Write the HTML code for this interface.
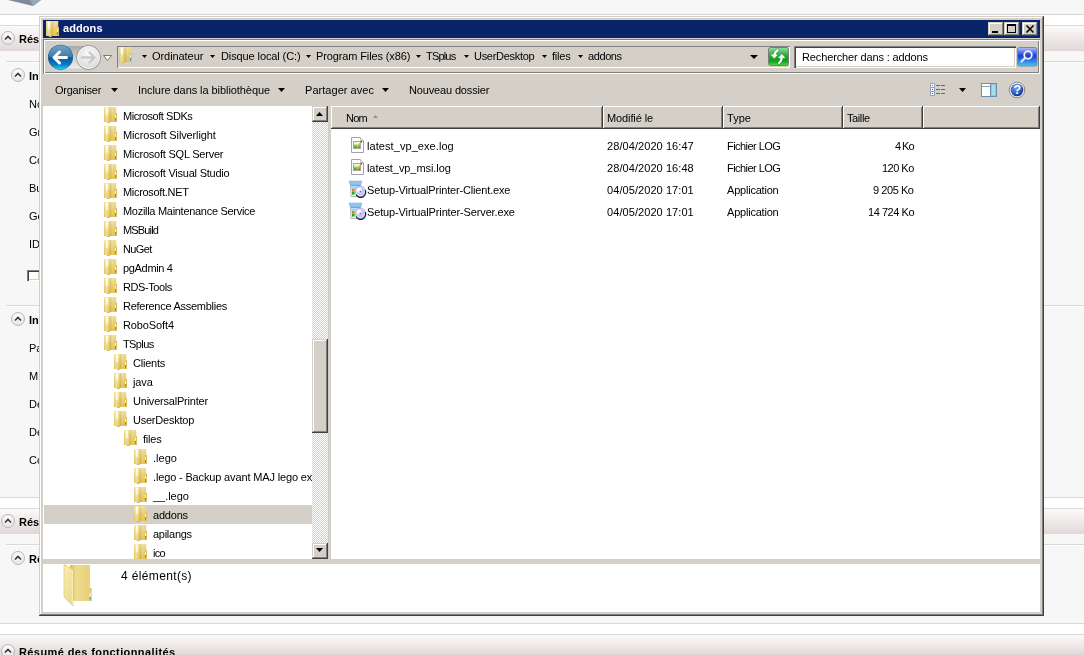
<!DOCTYPE html><html><head><meta charset="utf-8"><style>
html,body{margin:0;padding:0}
body{width:1084px;height:655px;position:relative;overflow:hidden;background:#f7f7f7;font-family:"Liberation Sans",sans-serif;}
.t{position:absolute;white-space:nowrap;will-change:transform}
.r{position:absolute}
svg{position:absolute;overflow:visible}
</style></head><body>
<svg width="0" height="0" style="position:absolute">
<defs>
<linearGradient id="fgF" x1="0" y1="0" x2="1" y2="0"><stop offset="0" stop-color="#e6c75c"/><stop offset="0.35" stop-color="#fbefb2"/><stop offset="0.7" stop-color="#f1da7c"/><stop offset="1" stop-color="#dcbb4e"/></linearGradient>
<linearGradient id="fgB" x1="0" y1="0" x2="1" y2="0"><stop offset="0" stop-color="#c9a642"/><stop offset="0.3" stop-color="#eed474"/><stop offset="1" stop-color="#e4c65e"/></linearGradient>
<linearGradient id="fgV" x1="0" y1="0" x2="0" y2="1"><stop offset="0" stop-color="#fff" stop-opacity="0.35"/><stop offset="1" stop-color="#c8a030" stop-opacity="0.25"/></linearGradient>
<symbol id="fold" viewBox="0 0 14 16">
 <rect x="6" y="0" width="6.2" height="15" fill="url(#fgB)"/>
 <rect x="11.8" y="6" width="1.2" height="9" fill="#dcbf58"/>
 <rect x="0" y="0" width="6.2" height="15" fill="url(#fgF)"/>
 <rect x="0" y="0" width="12.2" height="15" fill="url(#fgV)"/>
 <path d="M2 1 H4 L3.6 8 H2.4 Z" fill="#ffffff" opacity="0.9"/>
 <rect x="2.8" y="15" width="3" height="1" fill="#d6b955"/>
 <rect x="11" y="8" width="1" height="3" fill="#e6f3fb"/>
 <rect x="11" y="11" width="1" height="2.5" fill="#2e98dd"/>
</symbol>
<linearGradient id="gBack1" x1="0" y1="0" x2="0" y2="1"><stop offset="0" stop-color="#7aa2c4"/><stop offset="1" stop-color="#3e79a8"/></linearGradient>
<linearGradient id="gBack2" x1="0" y1="0" x2="0" y2="1"><stop offset="0" stop-color="#075a9e"/><stop offset="0.6" stop-color="#0a78c0"/><stop offset="1" stop-color="#22d0f8"/></linearGradient>
<radialGradient id="gFwd" cx="0.5" cy="0.35" r="0.7"><stop offset="0" stop-color="#fbfbfb"/><stop offset="1" stop-color="#d6d6d6"/></radialGradient>
<linearGradient id="gGreen" x1="0" y1="0" x2="0" y2="1"><stop offset="0" stop-color="#9cdcac"/><stop offset="0.45" stop-color="#12b024"/><stop offset="0.75" stop-color="#0ca418"/><stop offset="1" stop-color="#58d838"/></linearGradient>
<linearGradient id="gSearch" x1="0" y1="0" x2="0" y2="1"><stop offset="0" stop-color="#b4c0fa"/><stop offset="0.45" stop-color="#1838d8"/><stop offset="1" stop-color="#48c8f8"/></linearGradient>
<radialGradient id="gHelp" cx="0.4" cy="0.3" r="0.75"><stop offset="0" stop-color="#7aa8f0"/><stop offset="1" stop-color="#0a2c9a"/></radialGradient>
<linearGradient id="gBand" x1="0" y1="0" x2="0" y2="1"><stop offset="0" stop-color="#ffffff"/><stop offset="1" stop-color="#e2dedd"/></linearGradient>
<radialGradient id="gCirc" cx="0.5" cy="0.3" r="0.7"><stop offset="0" stop-color="#ffffff"/><stop offset="1" stop-color="#e4e4e4"/></radialGradient>
</defs>
</svg>

<div class="r" style="left:0px;top:0px;width:1084px;height:14px;background:#f7f7f7;"></div>
<svg style="left:0;top:0" width="50" height="8"><path d="M8 0 L33 6 L41 0 Z" fill="#7d8a99"/><path d="M30 0 L33 6 L41 0 Z" fill="#9aa6b3"/></svg>
<div class="r" style="left:0px;top:14px;width:1084px;height:1px;background:#d6d6d6;"></div>
<div class="r" style="left:0px;top:15px;width:1084px;height:10px;background:#ffffff;"></div>
<div class="r" style="left:0px;top:25px;width:1084px;height:1px;background:#dadada;"></div>
<div class="r" style="left:0px;top:26px;width:1084px;height:25px;background:linear-gradient(#fefafa,#dfd8d7);"></div>
<div class="r" style="left:0px;top:51px;width:1084px;height:446px;background:#f7f7f7;"></div>
<div class="r" style="left:6px;top:61px;width:1078px;height:1px;background:#dad8d8;"></div>
<div class="r" style="left:6px;top:62px;width:1078px;height:1px;background:#fdfdfd;"></div>
<svg style="left:0px;top:30px" width="16" height="16"><circle cx="8" cy="8" r="6.5" fill="url(#gCirc)" stroke="#b9b9b9" stroke-width="1"/><path d="M5 9.5 L8 6.5 L11 9.5" fill="none" stroke="#333" stroke-width="1.6"/></svg>
<div class="t" style="left:19px;top:33px;font:bold 11px/13px 'Liberation Sans',sans-serif;color:#000;letter-spacing:0.000px;">Résumé</div>
<svg style="left:9.5px;top:67px" width="16" height="16"><circle cx="8" cy="8" r="6.5" fill="url(#gCirc)" stroke="#b9b9b9" stroke-width="1"/><path d="M5 9.5 L8 6.5 L11 9.5" fill="none" stroke="#333" stroke-width="1.6"/></svg>
<div class="t" style="left:29px;top:70px;font:bold 11px/13px 'Liberation Sans',sans-serif;color:#000;letter-spacing:0.000px;">Informations</div>
<div class="t" style="left:29px;top:98px;font:11px/13px 'Liberation Sans',sans-serif;color:#000;letter-spacing:0.000px;">Nom</div>
<div class="t" style="left:29px;top:126px;font:11px/13px 'Liberation Sans',sans-serif;color:#000;letter-spacing:0.000px;">Groupe</div>
<div class="t" style="left:29px;top:154px;font:11px/13px 'Liberation Sans',sans-serif;color:#000;letter-spacing:0.000px;">Compte</div>
<div class="t" style="left:29px;top:182px;font:11px/13px 'Liberation Sans',sans-serif;color:#000;letter-spacing:0.000px;">Build</div>
<div class="t" style="left:29px;top:210px;font:11px/13px 'Liberation Sans',sans-serif;color:#000;letter-spacing:0.000px;">Gestion</div>
<div class="t" style="left:29px;top:238px;font:11px/13px 'Liberation Sans',sans-serif;color:#000;letter-spacing:0.000px;">ID</div>
<div class="r" style="left:27px;top:270px;width:13px;height:11px;background:#fff;box-shadow: inset 1px 1px #808080, inset 2px 2px #404040, inset -1px -1px #ffffff, inset -2px -2px #d4d0c8;"></div>
<div class="r" style="left:6px;top:305px;width:1078px;height:1px;background:#dad8d8;"></div>
<div class="r" style="left:6px;top:306px;width:1078px;height:1px;background:#fdfdfd;"></div>
<svg style="left:10px;top:310.5px" width="16" height="16"><circle cx="8" cy="8" r="6.5" fill="url(#gCirc)" stroke="#b9b9b9" stroke-width="1"/><path d="M5 9.5 L8 6.5 L11 9.5" fill="none" stroke="#333" stroke-width="1.6"/></svg>
<div class="t" style="left:29px;top:314px;font:bold 11px/13px 'Liberation Sans',sans-serif;color:#000;letter-spacing:0.000px;">Informations</div>
<div class="t" style="left:29px;top:342px;font:11px/13px 'Liberation Sans',sans-serif;color:#000;letter-spacing:0.000px;">Pare-feu</div>
<div class="t" style="left:29px;top:370px;font:11px/13px 'Liberation Sans',sans-serif;color:#000;letter-spacing:0.000px;">Mises</div>
<div class="t" style="left:29px;top:398px;font:11px/13px 'Liberation Sans',sans-serif;color:#000;letter-spacing:0.000px;">Deploiement</div>
<div class="t" style="left:29px;top:426px;font:11px/13px 'Liberation Sans',sans-serif;color:#000;letter-spacing:0.000px;">Deploiement</div>
<div class="t" style="left:29px;top:454px;font:11px/13px 'Liberation Sans',sans-serif;color:#000;letter-spacing:0.000px;">Config</div>
<div class="r" style="left:0px;top:497px;width:1084px;height:1px;background:#d9d9d9;"></div>
<div class="r" style="left:0px;top:498px;width:1084px;height:10px;background:#ffffff;"></div>
<div class="r" style="left:0px;top:508px;width:1084px;height:1px;background:#dadada;"></div>
<div class="r" style="left:0px;top:509px;width:1084px;height:25px;background:linear-gradient(#fefafa,#dfd8d7);"></div>
<svg style="left:0px;top:512.5px" width="16" height="16"><circle cx="8" cy="8" r="6.5" fill="url(#gCirc)" stroke="#b9b9b9" stroke-width="1"/><path d="M5 9.5 L8 6.5 L11 9.5" fill="none" stroke="#333" stroke-width="1.6"/></svg>
<div class="t" style="left:19px;top:516px;font:bold 11px/13px 'Liberation Sans',sans-serif;color:#000;letter-spacing:0.000px;">Résumé des rôles</div>
<div class="r" style="left:6px;top:544px;width:1078px;height:1px;background:#dad8d8;"></div>
<div class="r" style="left:6px;top:545px;width:1078px;height:1px;background:#fdfdfd;"></div>
<svg style="left:9.5px;top:550px" width="16" height="16"><circle cx="8" cy="8" r="6.5" fill="url(#gCirc)" stroke="#b9b9b9" stroke-width="1"/><path d="M5 9.5 L8 6.5 L11 9.5" fill="none" stroke="#333" stroke-width="1.6"/></svg>
<div class="t" style="left:29px;top:553px;font:bold 11px/13px 'Liberation Sans',sans-serif;color:#000;letter-spacing:0.000px;">Rôles</div>
<div class="r" style="left:0px;top:623px;width:1084px;height:1px;background:#d9d9d9;"></div>
<div class="r" style="left:0px;top:624px;width:1084px;height:10px;background:#ffffff;"></div>
<div class="r" style="left:0px;top:634px;width:1084px;height:1px;background:#dadada;"></div>
<div class="r" style="left:0px;top:635px;width:1084px;height:20px;background:linear-gradient(#fefafa,#dfd8d7);"></div>
<svg style="left:0px;top:643px" width="16" height="16"><circle cx="8" cy="8" r="6.5" fill="url(#gCirc)" stroke="#b9b9b9" stroke-width="1"/><path d="M5 9.5 L8 6.5 L11 9.5" fill="none" stroke="#333" stroke-width="1.6"/></svg>
<div class="t" style="left:19px;top:646px;font:bold 11px/13px 'Liberation Sans',sans-serif;color:#000;letter-spacing:0.000px;letter-spacing:0.4px">Résumé des fonctionnalités</div>
<div class="r" style="left:39px;top:16px;width:1005px;height:600px;background:#d4d0c8;box-shadow: inset -1px -1px #404040, inset 1px 1px #d4d0c8, inset -2px -2px #808080, inset 2px 2px #ffffff;"></div>
<div class="r" style="left:43px;top:20px;width:997px;height:18px;background:#0a246a;"></div>
<svg style="left:46px;top:21px" width="14" height="16"><use href="#fold" width="14" height="16"/></svg>
<div class="t" style="left:63px;top:22px;font:bold 11px/13px 'Liberation Sans',sans-serif;color:#fff;letter-spacing:0.080px;">addons</div>
<div class="r" style="left:988px;top:22px;width:16px;height:14px;background:#d4d0c8;box-shadow: inset -1px -1px #404040, inset 1px 1px #d4d0c8, inset -2px -2px #808080, inset 2px 2px #ffffff;"></div>
<div class="r" style="left:1004px;top:22px;width:16px;height:14px;background:#d4d0c8;box-shadow: inset -1px -1px #404040, inset 1px 1px #d4d0c8, inset -2px -2px #808080, inset 2px 2px #ffffff;"></div>
<div class="r" style="left:1022px;top:22px;width:16px;height:14px;background:#d4d0c8;box-shadow: inset -1px -1px #404040, inset 1px 1px #d4d0c8, inset -2px -2px #808080, inset 2px 2px #ffffff;"></div>
<div class="r" style="left:992px;top:31px;width:6px;height:2px;background:#000;"></div>
<div class="r" style="left:1007px;top:24px;width:9px;height:9px;background:transparent;box-sizing:border-box;border:1px solid #000;border-top-width:2px;"></div>
<svg style="left:1022px;top:22px" width="16" height="14"><path d="M4.5 3.5 L11.5 10.5 M11.5 3.5 L4.5 10.5" stroke="#000" stroke-width="1.6"/></svg>
<div class="r" style="left:43px;top:38px;width:997px;height:574px;background:#d4d0c8;"></div>
<div class="r" style="left:43px;top:39px;width:997px;height:35px;background:#d4d0c8;box-shadow: inset 1px 1px #808080, inset 2px 2px #ffffff, inset -1px -1px #ffffff, inset -2px -2px #808080;"></div>
<svg style="left:46px;top:43px" width="70" height="30">
<defs><linearGradient id="gPill" x1="0" y1="0" x2="0" y2="1"><stop offset="0" stop-color="#a9a9a9"/><stop offset="0.5" stop-color="#cfcfcf"/><stop offset="1" stop-color="#ececec"/></linearGradient></defs>
<rect x="12" y="3" width="32" height="22.5" fill="url(#gPill)"/>
<circle cx="42.5" cy="14.5" r="12" fill="url(#gFwd)" stroke="#8e8e8e" stroke-width="1"/>
<circle cx="42.5" cy="14.5" r="11" fill="none" stroke="#fafafa" stroke-width="0.8"/>
<path d="M36 14.5 H48 M43.5 9.5 L48.5 14.5 L43.5 19.5" fill="none" stroke="#c9c9c9" stroke-width="2.4" stroke-linecap="round" stroke-linejoin="round"/>
<circle cx="14.5" cy="14.2" r="12.5" fill="#1c5f96"/>
<path d="M2.5 14.2 A12 12 0 0 1 26.5 14.2 Z" fill="url(#gBack1)"/>
<path d="M2.5 14.2 A12 12 0 0 0 26.5 14.2 Z" fill="url(#gBack2)"/>
<path d="M20.5 14.5 H9 M13.5 9 L8 14.5 L13.5 20" fill="none" stroke="#ffffff" stroke-width="3" stroke-linecap="round" stroke-linejoin="round"/>
<path d="M57.5 12.5 L65.5 12.5 L61.5 17.5 Z" fill="#fff" stroke="#777" stroke-width="1"/>
</svg>
<div class="r" style="left:117px;top:46px;width:673px;height:22px;background:#d4d0c8;box-shadow: inset 1px 1px #808080, inset -1px -1px #ffffff;"></div>
<svg style="left:119px;top:47px" width="14" height="16"><use href="#fold" width="14" height="16"/></svg>
<svg style="left:142px;top:55px" width="5" height="3"><path d="M0 0 L5 0 L2.5 3 Z" fill="#000"/></svg>
<div class="t" style="left:152px;top:50px;font:11px/13px 'Liberation Sans',sans-serif;color:#000;letter-spacing:-0.067px;">Ordinateur</div>
<svg style="left:210px;top:55px" width="5" height="3"><path d="M0 0 L5 0 L2.5 3 Z" fill="#000"/></svg>
<div class="t" style="left:221px;top:50px;font:11px/13px 'Liberation Sans',sans-serif;color:#000;letter-spacing:-0.106px;">Disque local (C:)</div>
<svg style="left:306px;top:55px" width="5" height="3"><path d="M0 0 L5 0 L2.5 3 Z" fill="#000"/></svg>
<div class="t" style="left:316px;top:50px;font:11px/13px 'Liberation Sans',sans-serif;color:#000;letter-spacing:-0.122px;">Program Files (x86)</div>
<svg style="left:416px;top:55px" width="5" height="3"><path d="M0 0 L5 0 L2.5 3 Z" fill="#000"/></svg>
<div class="t" style="left:426px;top:50px;font:11px/13px 'Liberation Sans',sans-serif;color:#000;letter-spacing:-0.820px;">TSplus</div>
<svg style="left:464px;top:55px" width="5" height="3"><path d="M0 0 L5 0 L2.5 3 Z" fill="#000"/></svg>
<div class="t" style="left:474px;top:50px;font:11px/13px 'Liberation Sans',sans-serif;color:#000;letter-spacing:-0.300px;">UserDesktop</div>
<svg style="left:542px;top:55px" width="5" height="3"><path d="M0 0 L5 0 L2.5 3 Z" fill="#000"/></svg>
<div class="t" style="left:552px;top:50px;font:11px/13px 'Liberation Sans',sans-serif;color:#000;letter-spacing:-0.225px;">files</div>
<svg style="left:578px;top:55px" width="5" height="3"><path d="M0 0 L5 0 L2.5 3 Z" fill="#000"/></svg>
<div class="t" style="left:588px;top:50px;font:11px/13px 'Liberation Sans',sans-serif;color:#000;letter-spacing:-0.400px;">addons</div>
<svg style="left:750px;top:55px" width="8" height="4"><path d="M0 0 L8 0 L4.0 4 Z" fill="#000"/></svg>
<svg style="left:768px;top:47px" width="22" height="20">
<rect x="0.5" y="0.5" width="20" height="18" rx="2" fill="url(#gGreen)" stroke="#7c7c7c"/>
<g stroke="#0c5a10" stroke-width="1" stroke-linejoin="round" stroke-linecap="round" opacity="0.55"><path d="M6.3 9 Q6.6 5 9.6 3.2" fill="none" stroke-width="3.2"/><path d="M2.5 7.5 L10 7.5 L6.3 11.8 Z" fill="#0c5a10"/><path d="M13.8 10 Q13.6 14 11 16" fill="none" stroke-width="3.2"/><path d="M10 11 L17.5 11 L13.8 6.8 Z" fill="#0c5a10"/></g>
<g fill="#fff" stroke="#fff" stroke-linejoin="round" stroke-linecap="round"><path d="M6.3 9 Q6.6 5 9.6 3.2" fill="none" stroke-width="2.2"/><path d="M3 7.8 L9.5 7.8 L6.3 11.3 Z" stroke-width="0.6"/><path d="M13.8 10 Q13.6 14 11 16" fill="none" stroke-width="2.2"/><path d="M10.5 10.7 L17 10.7 L13.8 7.2 Z" stroke-width="0.6"/></g>
</svg>
<div class="r" style="left:794px;top:46px;width:222px;height:22px;background:#fff;box-shadow: inset 1px 1px #808080, inset 2px 2px #404040, inset -1px -1px #ffffff, inset -2px -2px #d4d0c8;"></div>
<div class="t" style="left:802px;top:51px;font:11px/13px 'Liberation Sans',sans-serif;color:#000;letter-spacing:-0.130px;">Rechercher dans : addons</div>
<svg style="left:1017px;top:47px" width="21" height="20">
<rect x="0.5" y="0.5" width="19.5" height="18.5" rx="2" fill="url(#gSearch)" stroke="#7a86a8"/>
<circle cx="11" cy="8" r="3.8" fill="none" stroke="#f4f4f4" stroke-width="1.8"/>
<path d="M8.2 10.8 L4.5 14.5" stroke="#e8e8e8" stroke-width="2.2" stroke-linecap="round"/>
</svg>
<div class="t" style="left:55px;top:84px;font:11px/13px 'Liberation Sans',sans-serif;color:#000;letter-spacing:-0.250px;">Organiser</div>
<svg style="left:111px;top:88px" width="7" height="4"><path d="M0 0 L7 0 L3.5 4 Z" fill="#000"/></svg>
<div class="t" style="left:138px;top:84px;font:11px/13px 'Liberation Sans',sans-serif;color:#000;letter-spacing:-0.067px;">Inclure dans la bibliothèque</div>
<svg style="left:278px;top:88px" width="7" height="4"><path d="M0 0 L7 0 L3.5 4 Z" fill="#000"/></svg>
<div class="t" style="left:305px;top:84px;font:11px/13px 'Liberation Sans',sans-serif;color:#000;letter-spacing:0.042px;">Partager avec</div>
<svg style="left:382px;top:88px" width="7" height="4"><path d="M0 0 L7 0 L3.5 4 Z" fill="#000"/></svg>
<div class="t" style="left:409px;top:84px;font:11px/13px 'Liberation Sans',sans-serif;color:#000;letter-spacing:-0.150px;">Nouveau dossier</div>
<svg style="left:929px;top:82px" width="18" height="16" shape-rendering="crispEdges">
<rect x="1.5" y="1.5" width="4" height="4" fill="#fff" stroke="#8ea4c0"/><rect x="3" y="3" width="1" height="1" fill="#3a9a3a"/>
<rect x="1.5" y="5.5" width="4" height="4" fill="#fff" stroke="#8ea4c0"/><rect x="3" y="7" width="1" height="1" fill="#e02020"/>
<rect x="1.5" y="9.5" width="4" height="4" fill="#fff" stroke="#8ea4c0"/><rect x="3" y="11" width="1" height="1" fill="#2050e0"/>
<rect x="7" y="3" width="4" height="1" fill="#56687a"/><rect x="12" y="3" width="4" height="1" fill="#56687a"/>
<rect x="7" y="7" width="4" height="1" fill="#56687a"/><rect x="12" y="7" width="4" height="1" fill="#56687a"/>
<rect x="7" y="11" width="4" height="1" fill="#56687a"/><rect x="12" y="11" width="4" height="1" fill="#56687a"/>
</svg>
<svg style="left:959px;top:88px" width="7" height="4"><path d="M0 0 L7 0 L3.5 4 Z" fill="#000"/></svg>
<svg style="left:981px;top:83px" width="17" height="15" shape-rendering="crispEdges">
<rect x="0.5" y="0.5" width="15" height="13" fill="#fff" stroke="#6f8eae"/>
<rect x="1" y="1" width="8" height="2" fill="#fff"/><rect x="1" y="3" width="8" height="1" fill="#8aa6c2"/>
<rect x="9" y="1" width="1" height="12" fill="#6f8eae"/>
<rect x="10" y="1" width="5" height="12" fill="#86cbe6"/><rect x="11" y="2" width="3" height="10" fill="#a8dcee"/>
</svg>
<svg style="left:1008px;top:81px" width="18" height="18">
<circle cx="9" cy="9" r="7.8" fill="#f4f4f4" stroke="#8a8a8a" stroke-width="1"/>
<circle cx="9" cy="9" r="6.3" fill="url(#gHelp)"/>
<text x="9.2" y="13.3" text-anchor="middle" font-family="Liberation Sans" font-weight="bold" font-size="12.5" fill="#fff">?</text>
</svg>
<div class="r" style="left:43px;top:106px;width:269px;height:453px;background:#fff;"></div>
<div class="r" style="left:44px;top:505px;width:268px;height:19px;background:#d4d0c8;"></div>
<div class="r" style="left:43px;top:106px;width:269px;height:453px;overflow:hidden">
<svg style="left:61px;top:1px" width="14" height="16"><use href="#fold" width="14" height="16"/></svg>
<div class="t" style="left:80px;top:4px;font:11px/13px 'Liberation Sans',sans-serif;color:#000;letter-spacing:-0.462px;">Microsoft SDKs</div>
<svg style="left:61px;top:20px" width="14" height="16"><use href="#fold" width="14" height="16"/></svg>
<div class="t" style="left:80px;top:23px;font:11px/13px 'Liberation Sans',sans-serif;color:#000;letter-spacing:-0.130px;">Microsoft Silverlight</div>
<svg style="left:61px;top:39px" width="14" height="16"><use href="#fold" width="14" height="16"/></svg>
<div class="t" style="left:80px;top:42px;font:11px/13px 'Liberation Sans',sans-serif;color:#000;letter-spacing:-0.221px;">Microsoft SQL Server</div>
<svg style="left:61px;top:58px" width="14" height="16"><use href="#fold" width="14" height="16"/></svg>
<div class="t" style="left:80px;top:61px;font:11px/13px 'Liberation Sans',sans-serif;color:#000;letter-spacing:-0.227px;">Microsoft Visual Studio</div>
<svg style="left:61px;top:77px" width="14" height="16"><use href="#fold" width="14" height="16"/></svg>
<div class="t" style="left:80px;top:80px;font:11px/13px 'Liberation Sans',sans-serif;color:#000;letter-spacing:-0.317px;">Microsoft.NET</div>
<svg style="left:61px;top:96px" width="14" height="16"><use href="#fold" width="14" height="16"/></svg>
<div class="t" style="left:80px;top:99px;font:11px/13px 'Liberation Sans',sans-serif;color:#000;letter-spacing:-0.292px;">Mozilla Maintenance Service</div>
<svg style="left:61px;top:115px" width="14" height="16"><use href="#fold" width="14" height="16"/></svg>
<div class="t" style="left:80px;top:118px;font:11px/13px 'Liberation Sans',sans-serif;color:#000;letter-spacing:-0.833px;">MSBuild</div>
<svg style="left:61px;top:134px" width="14" height="16"><use href="#fold" width="14" height="16"/></svg>
<div class="t" style="left:80px;top:137px;font:11px/13px 'Liberation Sans',sans-serif;color:#000;letter-spacing:-0.625px;">NuGet</div>
<svg style="left:61px;top:153px" width="14" height="16"><use href="#fold" width="14" height="16"/></svg>
<div class="t" style="left:80px;top:156px;font:11px/13px 'Liberation Sans',sans-serif;color:#000;letter-spacing:-0.325px;">pgAdmin 4</div>
<svg style="left:61px;top:172px" width="14" height="16"><use href="#fold" width="14" height="16"/></svg>
<div class="t" style="left:80px;top:175px;font:11px/13px 'Liberation Sans',sans-serif;color:#000;letter-spacing:-0.413px;">RDS-Tools</div>
<svg style="left:61px;top:191px" width="14" height="16"><use href="#fold" width="14" height="16"/></svg>
<div class="t" style="left:80px;top:194px;font:11px/13px 'Liberation Sans',sans-serif;color:#000;letter-spacing:-0.274px;">Reference Assemblies</div>
<svg style="left:61px;top:210px" width="14" height="16"><use href="#fold" width="14" height="16"/></svg>
<div class="t" style="left:80px;top:213px;font:11px/13px 'Liberation Sans',sans-serif;color:#000;letter-spacing:-0.112px;">RoboSoft4</div>
<svg style="left:61px;top:229px" width="14" height="16"><use href="#fold" width="14" height="16"/></svg>
<div class="t" style="left:80px;top:232px;font:11px/13px 'Liberation Sans',sans-serif;color:#000;letter-spacing:-0.600px;">TSplus</div>
<svg style="left:71px;top:248px" width="14" height="16"><use href="#fold" width="14" height="16"/></svg>
<div class="t" style="left:90px;top:251px;font:11px/13px 'Liberation Sans',sans-serif;color:#000;letter-spacing:-0.217px;">Clients</div>
<svg style="left:71px;top:267px" width="14" height="16"><use href="#fold" width="14" height="16"/></svg>
<div class="t" style="left:90px;top:270px;font:11px/13px 'Liberation Sans',sans-serif;color:#000;letter-spacing:-0.100px;">java</div>
<svg style="left:71px;top:286px" width="14" height="16"><use href="#fold" width="14" height="16"/></svg>
<div class="t" style="left:90px;top:289px;font:11px/13px 'Liberation Sans',sans-serif;color:#000;letter-spacing:-0.213px;">UniversalPrinter</div>
<svg style="left:71px;top:305px" width="14" height="16"><use href="#fold" width="14" height="16"/></svg>
<div class="t" style="left:90px;top:308px;font:11px/13px 'Liberation Sans',sans-serif;color:#000;letter-spacing:-0.230px;">UserDesktop</div>
<svg style="left:81px;top:324px" width="14" height="16"><use href="#fold" width="14" height="16"/></svg>
<div class="t" style="left:100px;top:327px;font:11px/13px 'Liberation Sans',sans-serif;color:#000;letter-spacing:-0.200px;">files</div>
<svg style="left:91px;top:343px" width="14" height="16"><use href="#fold" width="14" height="16"/></svg>
<div class="t" style="left:110px;top:346px;font:11px/13px 'Liberation Sans',sans-serif;color:#000;letter-spacing:0.025px;">.lego</div>
<svg style="left:91px;top:362px" width="14" height="16"><use href="#fold" width="14" height="16"/></svg>
<div class="t" style="left:110px;top:365px;font:11px/13px 'Liberation Sans',sans-serif;color:#000;letter-spacing:-0.150px;">.lego - Backup avant MAJ lego export</div>
<svg style="left:91px;top:381px" width="14" height="16"><use href="#fold" width="14" height="16"/></svg>
<div class="t" style="left:110px;top:384px;font:11px/13px 'Liberation Sans',sans-serif;color:#000;letter-spacing:-0.033px;">__.lego</div>
<svg style="left:91px;top:400px" width="14" height="16"><use href="#fold" width="14" height="16"/></svg>
<div class="t" style="left:110px;top:403px;font:11px/13px 'Liberation Sans',sans-serif;color:#000;letter-spacing:-0.200px;">addons</div>
<svg style="left:91px;top:419px" width="14" height="16"><use href="#fold" width="14" height="16"/></svg>
<div class="t" style="left:110px;top:422px;font:11px/13px 'Liberation Sans',sans-serif;color:#000;letter-spacing:-0.271px;">apilangs</div>
<svg style="left:91px;top:438px" width="14" height="16"><use href="#fold" width="14" height="16"/></svg>
<div class="t" style="left:110px;top:441px;font:11px/13px 'Liberation Sans',sans-serif;color:#000;letter-spacing:-0.750px;">ico</div>
</div>
<div class="r" style="left:312px;top:122px;width:16px;height:437px;background:repeating-conic-gradient(#d4d0c8 0 25%, #ffffff 0 50%) 0 0/2px 2px;"></div>
<div class="r" style="left:312px;top:106px;width:16px;height:16px;background:#d4d0c8;box-shadow: inset -1px -1px #404040, inset 1px 1px #d4d0c8, inset -2px -2px #808080, inset 2px 2px #ffffff;"></div>
<svg style="left:316px;top:112px" width="7" height="4"><path d="M0 4 L3.5 0 L7 4 Z" fill="#000"/></svg>
<div class="r" style="left:312px;top:339px;width:16px;height:94px;background:#d4d0c8;box-shadow: inset -1px -1px #404040, inset 1px 1px #d4d0c8, inset -2px -2px #808080, inset 2px 2px #ffffff;"></div>
<div class="r" style="left:312px;top:543px;width:16px;height:16px;background:#d4d0c8;box-shadow: inset -1px -1px #404040, inset 1px 1px #d4d0c8, inset -2px -2px #808080, inset 2px 2px #ffffff;"></div>
<svg style="left:316px;top:548px" width="7" height="4"><path d="M0 0 L7 0 L3.5 4 Z" fill="#000"/></svg>
<div class="r" style="left:331px;top:106px;width:709px;height:453px;background:#fff;"></div>
<div class="r" style="left:331px;top:106px;width:272px;height:23px;background:#d4d0c8;box-shadow: inset -1px -1px #404040, inset 1px 1px #ffffff, inset -2px -2px #808080;"></div>
<div class="r" style="left:603px;top:106px;width:120px;height:23px;background:#d4d0c8;box-shadow: inset -1px -1px #404040, inset 1px 1px #ffffff, inset -2px -2px #808080;"></div>
<div class="r" style="left:723px;top:106px;width:120px;height:23px;background:#d4d0c8;box-shadow: inset -1px -1px #404040, inset 1px 1px #ffffff, inset -2px -2px #808080;"></div>
<div class="r" style="left:843px;top:106px;width:80px;height:23px;background:#d4d0c8;box-shadow: inset -1px -1px #404040, inset 1px 1px #ffffff, inset -2px -2px #808080;"></div>
<div class="r" style="left:923px;top:106px;width:117px;height:23px;background:#d4d0c8;box-shadow: inset -1px -1px #404040, inset 1px 1px #ffffff, inset -2px -2px #808080;"></div>
<div class="t" style="left:346px;top:112px;font:11px/13px 'Liberation Sans',sans-serif;color:#000;letter-spacing:-0.750px;">Nom</div>
<svg style="left:373px;top:115px" width="5" height="3"><path d="M0 3 L2.5 0 L5 3 Z" fill="#909090"/></svg>
<div class="t" style="left:607px;top:112px;font:11px/13px 'Liberation Sans',sans-serif;color:#000;letter-spacing:-0.111px;">Modifié le</div>
<div class="t" style="left:727px;top:112px;font:11px/13px 'Liberation Sans',sans-serif;color:#000;letter-spacing:0.033px;">Type</div>
<div class="t" style="left:847px;top:112px;font:11px/13px 'Liberation Sans',sans-serif;color:#000;letter-spacing:-0.400px;">Taille</div>
<svg style="left:350px;top:136px" width="16" height="18">
<defs><linearGradient id="gLog" x1="0" y1="0" x2="0" y2="1"><stop offset="0" stop-color="#f4f4fb"/><stop offset="0.35" stop-color="#e8f6c0"/><stop offset="0.6" stop-color="#7ccc3c"/><stop offset="1" stop-color="#149a1c"/></linearGradient></defs>
<path d="M1.5 1.5 H10.5 L13.5 4.5 V16.5 H1.5 Z" fill="#fff" stroke="#a4a4a4"/>
<path d="M10.5 1.5 V4.5 H13.5" fill="#eeeeee" stroke="#c4c4c4"/>
<rect x="3.5" y="5.5" width="7" height="7" fill="url(#gLog)" stroke="#a2a2b0"/>
<path d="M6.8 11.8 L11 6.3" stroke="#f2a82a" stroke-width="1.3"/>
<circle cx="11.4" cy="5.6" r="0.9" fill="#b42020"/>
</svg>
<div class="t" style="left:367px;top:140px;font:11px/13px 'Liberation Sans',sans-serif;color:#000;letter-spacing:0.069px;">latest_vp_exe.log</div>
<div class="t" style="left:607px;top:140px;font:11px/13px 'Liberation Sans',sans-serif;color:#000;letter-spacing:0.073px;">28/04/2020 16:47</div>
<div class="t" style="left:727px;top:140px;font:11px/13px 'Liberation Sans',sans-serif;color:#000;letter-spacing:-0.550px;">Fichier LOG</div>
<div class="t" style="right:170.20000000000005px;top:140px;font:11px/13px 'Liberation Sans',sans-serif;letter-spacing:-1.033px">4 Ko</div>
<svg style="left:350px;top:158px" width="16" height="18">
<defs><linearGradient id="gLog" x1="0" y1="0" x2="0" y2="1"><stop offset="0" stop-color="#f4f4fb"/><stop offset="0.35" stop-color="#e8f6c0"/><stop offset="0.6" stop-color="#7ccc3c"/><stop offset="1" stop-color="#149a1c"/></linearGradient></defs>
<path d="M1.5 1.5 H10.5 L13.5 4.5 V16.5 H1.5 Z" fill="#fff" stroke="#a4a4a4"/>
<path d="M10.5 1.5 V4.5 H13.5" fill="#eeeeee" stroke="#c4c4c4"/>
<rect x="3.5" y="5.5" width="7" height="7" fill="url(#gLog)" stroke="#a2a2b0"/>
<path d="M6.8 11.8 L11 6.3" stroke="#f2a82a" stroke-width="1.3"/>
<circle cx="11.4" cy="5.6" r="0.9" fill="#b42020"/>
</svg>
<div class="t" style="left:367px;top:162px;font:11px/13px 'Liberation Sans',sans-serif;color:#000;letter-spacing:-0.075px;">latest_vp_msi.log</div>
<div class="t" style="left:607px;top:162px;font:11px/13px 'Liberation Sans',sans-serif;color:#000;letter-spacing:0.073px;">28/04/2020 16:48</div>
<div class="t" style="left:727px;top:162px;font:11px/13px 'Liberation Sans',sans-serif;color:#000;letter-spacing:-0.550px;">Fichier LOG</div>
<div class="t" style="right:170.20000000000005px;top:162px;font:11px/13px 'Liberation Sans',sans-serif;letter-spacing:-0.520px">120 Ko</div>
<svg style="left:348px;top:180px" width="18" height="18">
<path d="M2.5 4.5 H12.5 V16.5 H3 Z" fill="#f6fafd" stroke="#b4b4b4"/>
<path d="M1 1 H14 L12.8 5 H2.2 Z" fill="#86c8f6" stroke="#a8b0c0" stroke-width="0.6"/>
<rect x="3" y="5.2" width="9" height="1" fill="#6a8ad8"/>
<rect x="3.2" y="6.5" width="8" height="3" fill="#9fd6f6"/>
<rect x="4" y="9" width="2.6" height="2.6" fill="#f27c1c"/><rect x="4" y="11.6" width="2.6" height="3" fill="#16aa16"/>
<circle cx="12.3" cy="11.3" r="5.1" fill="#eaeafe" stroke="#9a9ad8" stroke-width="0.8"/><path d="M17.2 10 A5.1 5.1 0 0 1 8 14.5" fill="none" stroke="#1e1e28" stroke-width="1.2"/>
<circle cx="12.3" cy="11.3" r="3.9" fill="#c4c4f6"/><circle cx="11.2" cy="10.2" r="2.4" fill="#ffffff"/>
<circle cx="12.3" cy="11.3" r="0.9" fill="#7070c8"/>
</svg>
<div class="t" style="left:367px;top:184px;font:11px/13px 'Liberation Sans',sans-serif;color:#000;letter-spacing:-0.163px;">Setup-VirtualPrinter-Client.exe</div>
<div class="t" style="left:607px;top:184px;font:11px/13px 'Liberation Sans',sans-serif;color:#000;letter-spacing:0.073px;">04/05/2020 17:01</div>
<div class="t" style="left:727px;top:184px;font:11px/13px 'Liberation Sans',sans-serif;color:#000;letter-spacing:-0.210px;">Application</div>
<div class="t" style="right:170.20000000000005px;top:184px;font:11px/13px 'Liberation Sans',sans-serif;letter-spacing:-0.443px">9 205 Ko</div>
<svg style="left:348px;top:202px" width="18" height="18">
<path d="M2.5 4.5 H12.5 V16.5 H3 Z" fill="#f6fafd" stroke="#b4b4b4"/>
<path d="M1 1 H14 L12.8 5 H2.2 Z" fill="#86c8f6" stroke="#a8b0c0" stroke-width="0.6"/>
<rect x="3" y="5.2" width="9" height="1" fill="#6a8ad8"/>
<rect x="3.2" y="6.5" width="8" height="3" fill="#9fd6f6"/>
<rect x="4" y="9" width="2.6" height="2.6" fill="#f27c1c"/><rect x="4" y="11.6" width="2.6" height="3" fill="#16aa16"/>
<circle cx="12.3" cy="11.3" r="5.1" fill="#eaeafe" stroke="#9a9ad8" stroke-width="0.8"/><path d="M17.2 10 A5.1 5.1 0 0 1 8 14.5" fill="none" stroke="#1e1e28" stroke-width="1.2"/>
<circle cx="12.3" cy="11.3" r="3.9" fill="#c4c4f6"/><circle cx="11.2" cy="10.2" r="2.4" fill="#ffffff"/>
<circle cx="12.3" cy="11.3" r="0.9" fill="#7070c8"/>
</svg>
<div class="t" style="left:367px;top:206px;font:11px/13px 'Liberation Sans',sans-serif;color:#000;letter-spacing:-0.137px;">Setup-VirtualPrinter-Server.exe</div>
<div class="t" style="left:607px;top:206px;font:11px/13px 'Liberation Sans',sans-serif;color:#000;letter-spacing:0.073px;">04/05/2020 17:01</div>
<div class="t" style="left:727px;top:206px;font:11px/13px 'Liberation Sans',sans-serif;color:#000;letter-spacing:-0.210px;">Application</div>
<div class="t" style="right:170.20000000000005px;top:206px;font:11px/13px 'Liberation Sans',sans-serif;letter-spacing:-0.450px">14 724 Ko</div>
<div class="r" style="left:43px;top:559px;width:997px;height:5px;background:#d4d0c8;"></div>
<div class="r" style="left:43px;top:564px;width:997px;height:48px;background:#fff;"></div>
<svg style="left:62px;top:563px" width="34" height="46">
<defs><linearGradient id="bfB" x1="0" y1="0" x2="1" y2="0"><stop offset="0" stop-color="#d6b955"/><stop offset="0.3" stop-color="#efdb8e"/><stop offset="1" stop-color="#e8d077"/></linearGradient>
<linearGradient id="bfF" x1="0" y1="0" x2="1" y2="1"><stop offset="0" stop-color="#f8eeb8"/><stop offset="1" stop-color="#eed680"/></linearGradient></defs>
<path d="M8 2 H28 V38 H11 Z" fill="url(#bfB)"/>
<rect x="27.5" y="25" width="2.2" height="13" fill="#e2c868"/>
<rect x="27.6" y="30" width="1.2" height="4" fill="#eaf4fa"/><rect x="27.6" y="34" width="1.2" height="2.5" fill="#3a98e0"/>
<path d="M2 1.5 L11 6.5 L11 43 L2 34 Z" fill="url(#bfF)" stroke="#e0c66e" stroke-width="0.7"/>
<path d="M10.3 7 L10.3 42" stroke="#fdf8dc" stroke-width="0.8"/>
</svg>
<div class="t" style="left:121px;top:570px;font:12px/13px 'Liberation Sans',sans-serif;color:#000;letter-spacing:0.355px;">4 élément(s)</div>
</body></html>
